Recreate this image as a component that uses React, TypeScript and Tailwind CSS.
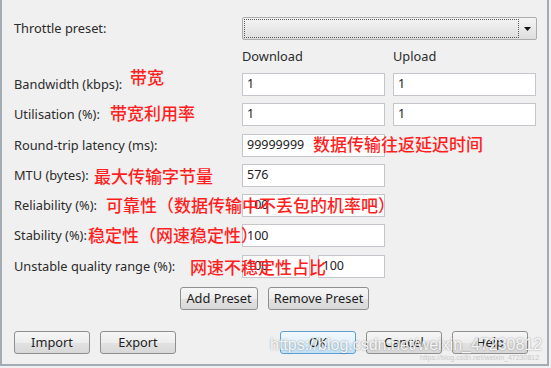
import type { ReactNode } from "react";

const FONT = "font-['Segoe_UI','Noto_Sans',sans-serif]";

function Field({ value, className = "" }: { value: string; className?: string }) {
  return (
    <div
      className={`h-[23px] bg-white border border-[#c4c6cc] flex items-center pl-[4px] text-[12.5px] text-[#222] ${className}`}
    >
      {value}
    </div>
  );
}

function Btn({ children, className = "" }: { children: ReactNode; className?: string }) {
  return (
    <div
      className={`h-[23px] flex items-center justify-center rounded-[3px] border text-[12.8px] text-[#1e1e1e] ${className}`}
    >
      {children}
    </div>
  );
}

const plainBtn =
  "border-[#8e8f8f] bg-[linear-gradient(to_bottom,#f6f6f6_0%,#ededed_50%,#e2e2e2_51%,#d8d8d8_100%)]";
const okBtn =
  "border-[#5d9fd0] bg-[linear-gradient(to_bottom,#f1f8fd_0%,#e2f1fb_50%,#d2eaf9_51%,#c3e2f6_100%)]";

function Note({ text, className }: { text: string; className: string }) {
  return (
    <span
      className={`absolute whitespace-nowrap text-[17px] leading-[17px] font-medium text-[#ff1f1f] font-['Noto_Sans_CJK_SC',sans-serif] ${className}`}
    >
      {text}
    </span>
  );
}

function Row({
  label,
  down,
  up,
  note,
}: {
  label: string;
  down: ReactNode;
  up?: string;
  note?: ReactNode;
}) {
  return (
    <div className="relative flex items-center h-[23px]">
      <div className="w-[228px] text-[12.8px] text-[#2b2b2b]">{label}</div>
      <div className="w-[143px]">{down}</div>
      {up !== undefined && <Field value={up} className="w-[143px] ml-[8px]" />}
      {note}
    </div>
  );
}

export default function App() {
  return (
    <div
      className={`relative w-[551px] h-[368px] bg-[#f0f0f0] overflow-hidden ${FONT}`}
    >
      <div className="w-[549px] h-[366px] border-l-2 border-r-2 border-b-2 border-[#a3acb5] pl-[12px] pt-[17px]">
        {/* preset */}
        <div className="flex items-center h-[23px]">
          <div className="w-[228px] text-[12.8px] text-[#2b2b2b]">Throttle preset:</div>
          <div className="relative w-[295px] h-[23px] rounded-[2px] border border-[#acacac] bg-[linear-gradient(to_bottom,#f4f4f4,#dedede)] flex items-center">
            <div className="ml-[1px] w-[275px] h-[19px] border border-dotted border-[#5a5a5a]" />
            <div className="flex-1 flex justify-center">
              <svg width="7" height="4" viewBox="0 0 7 4">
                <path d="M0 0H7L3.5 4Z" fill="#111" />
              </svg>
            </div>
          </div>
        </div>

        <div className="flex items-center h-[33px] text-[12.8px] text-[#2b2b2b]">
          <div className="w-[228px]" />
          <div className="w-[151px]">Download</div>
          <div>Upload</div>
        </div>

        <div className="flex flex-col gap-y-[7.3px]">
          <Row
            label="Bandwidth (kbps):"
            down={<Field value="1" />}
            up="1"
            note={<Note text="带宽" className="left-[116px] top-[-5px]" />}
          />
          <Row
            label="Utilisation (%):"
            down={<Field value="1" />}
            up="1"
            note={<Note text="带宽利用率" className="left-[96px] top-[1px]" />}
          />
          <Row
            label="Round-trip latency (ms):"
            down={<Field value="99999999" />}
            note={<Note text="数据传输往返延迟时间" className="left-[299px] top-[1px]" />}
          />
          <Row
            label="MTU (bytes):"
            down={<Field value="576" />}
            note={<Note text="最大传输字节量" className="left-[80px] top-[3px]" />}
          />
          <Row
            label="Reliability (%):"
            down={<Field value="100" />}
            note={
              <Note
                text="可靠性（数据传输中不丢包的机率吧）"
                className="left-[92px] top-[2px]"
              />
            }
          />
          <Row
            label="Stability (%):"
            down={<Field value="100" />}
            note={<Note text="稳定性（网速稳定性）" className="left-[74px] top-[2px]" />}
          />
          <Row
            label="Unstable quality range (%):"
            down={
              <div className="flex gap-[8px]">
                <Field value="100" className="flex-1" />
                <Field value="100" className="flex-1" />
              </div>
            }
            note={<Note text="网速不稳定性占比" className="left-[176px] top-[3px]" />}
          />
        </div>

        <div className="flex justify-center gap-[10px] mt-[9px] pr-[12px]">
          <Btn className={`w-[78px] ${plainBtn}`}>Add Preset</Btn>
          <Btn className={`w-[101px] ${plainBtn}`}>Remove Preset</Btn>
        </div>

        <div className="flex items-center mt-[21px]">
          <Btn className={`w-[76px] ${plainBtn}`}>Import</Btn>
          <Btn className={`w-[76px] ml-[10px] ${plainBtn}`}>Export</Btn>
          <Btn className={`w-[76px] ml-[104px] ${okBtn}`}>OK</Btn>
          <Btn className={`w-[76px] ml-[10px] ${plainBtn}`}>Cancel</Btn>
          <Btn className={`w-[76px] ml-[10px] ${plainBtn}`}>Help</Btn>
        </div>
      </div>

      {/* watermark */}
      <div className="absolute left-[270px] top-[335px] text-[16px] leading-[20px] text-white/90 font-['Liberation_Sans',sans-serif] [text-shadow:0_0_2px_rgba(0,0,0,0.45)]">
        https://blog.csdn.net/weixin_47230812
      </div>
      <div className="absolute left-[420px] top-[354px] text-[7px] leading-[8px] text-[#c9c9c9] font-['Liberation_Sans',sans-serif]">
        https://blog.csdn.net/weixin_47230812
      </div>
    </div>
  );
}
